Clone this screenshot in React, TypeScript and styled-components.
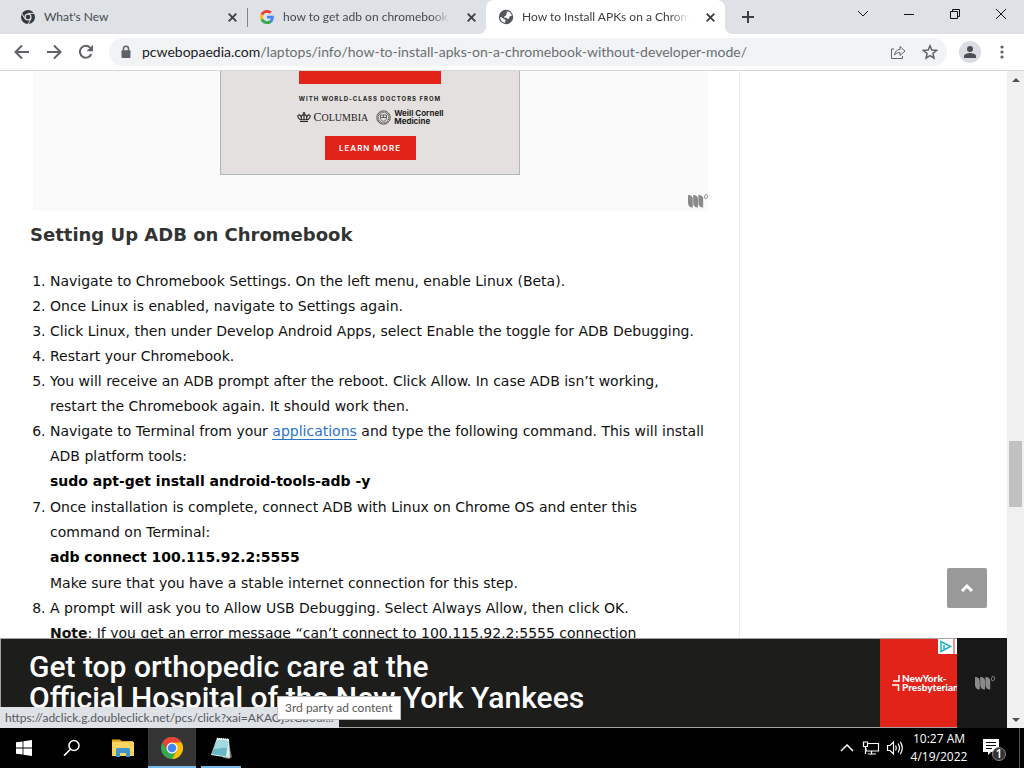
import React from "react";
import styled, { createGlobalStyle, css } from "styled-components";

const ui = `Lato, "Open Sans", sans-serif`;

const Global = createGlobalStyle`
  *, *::before, *::after { box-sizing: border-box; }
  body { margin: 0; background: #fff; font-family: ${ui}; }
  button { border: 0; padding: 0; margin: 0; background: none; font: inherit; color: inherit; }
  svg { display: block; flex: none; }
`;

const Screen = styled.div`
  height: 100vh;
  display: flex;
  flex-direction: column;
  overflow: hidden;
`;

/* ---------- tab strip ---------- */

const TabStrip = styled.header`
  display: flex;
  align-items: stretch;
  height: 34px;
  flex: none;
  padding-left: 8px;
  background: #dee1e6;
`;

const Tab = styled.div<{ $active?: boolean; $divider?: boolean }>`
  position: relative;
  flex: 0 1 239px;
  min-width: 0;
  display: flex;
  align-items: center;
  gap: 8px;
  padding: 0 7px 0 12px;
  color: ${(p) => (p.$active ? "#3c4043" : "#45494d")};
  ${(p) =>
    p.$divider &&
    css`
      &::after {
        content: "";
        position: absolute;
        right: -1px;
        top: 8px;
        width: 1px;
        height: 19px;
        background: #808488;
      }
    `}
  ${(p) =>
    p.$active &&
    css`
      background: #fff;
      border-radius: 8px 8px 0 0;
      &::before,
      &::after {
        content: "";
        position: absolute;
        bottom: 0;
        width: 8px;
        height: 8px;
      }
      &::before {
        left: -8px;
        background: radial-gradient(circle at 0 0, transparent 8px, #fff 8px);
      }
      &::after {
        right: -8px;
        background: radial-gradient(circle at 100% 0, transparent 8px, #fff 8px);
      }
    `}
`;

const TabTitle = styled.span<{ $fade?: boolean }>`
  flex: 1;
  min-width: 0;
  margin-right: 5px;
  overflow: hidden;
  white-space: nowrap;
  font-size: 12px;
  line-height: 18px;
  ${(p) => p.$fade && css`mask-image: linear-gradient(to right, #000 88%, transparent);`}
`;

const IconButton = styled.button<{ $w: number; $h?: number }>`
  width: ${(p) => p.$w}px;
  height: ${(p) => p.$h ?? p.$w}px;
  flex: none;
  display: flex;
  align-items: center;
  justify-content: center;
  color: #5f6368;
`;

const NewTab = styled(IconButton)`
  margin-left: 9px;
  align-self: center;
  color: #3c4043;
`;

const WindowControls = styled.div`
  margin-left: auto;
  display: flex;
  flex: none;
  button { color: #111; }
`;

/* ---------- toolbar ---------- */

const Toolbar = styled.nav`
  display: flex;
  align-items: center;
  height: 37px;
  flex: none;
  padding: 0 6px;
  background: #fff;
  border-bottom: 1px solid #d5d6d8;
`;

const AddressBar = styled.div`
  flex: 1;
  min-width: 0;
  height: 28px;
  margin: 0 7px;
  padding: 0 1px 0 11px;
  display: flex;
  align-items: center;
  gap: 10px;
  border-radius: 14px;
  background: #f1f3f4;
`;

const Url = styled.a`
  flex: 1;
  min-width: 0;
  overflow: hidden;
  white-space: nowrap;
  font-size: 14px;
  line-height: 20px;
  color: #6b6f73;
  text-decoration: none;
  b { font-weight: 400; color: #202124; }
`;

const BarActions = styled.div`
  display: flex;
`;

const Avatar = styled.span`
  width: 22px;
  height: 22px;
  border-radius: 50%;
  background: #d9dde3;
  display: flex;
  align-items: center;
  justify-content: center;
`;

/* ---------- page ---------- */

const Viewport = styled.div`
  position: relative;
  flex: 1;
  min-height: 0;
  display: flex;
`;

const Page = styled.main`
  position: relative;
  flex: 1;
  min-width: 0;
  display: flex;
  flex-direction: column;
`;

const Columns = styled.div`
  flex: 1;
  min-height: 0;
  overflow: hidden;
  display: grid;
  grid-template-columns: minmax(0, 740px) minmax(0, 1fr);
`;

const Article = styled.article`
  padding: 0 31px 0 30px;
  border-right: 1px solid #ededed;
  font-family: "DejaVu Sans", Verdana, sans-serif;
  color: #111;
`;

const AdSlot = styled.section`
  position: relative;
  margin-left: 3px;
  padding-right: 1px;
  height: 140px;
  background: #fafafa;
  display: flex;
  justify-content: center;
  align-items: flex-start;
`;

const AdCard = styled.div`
  width: 300px;
  height: 104px;
  border: 1px solid #b3b6b9;
  border-top: 0;
  background: #e4e0df;
  display: flex;
  flex-direction: column;
  align-items: center;
  font-family: Inter, sans-serif;
`;

const RedBar = styled.div`
  width: 142px;
  height: 13px;
  background: #e2231a;
`;

const AdCaption = styled.p`
  margin: 10px 0 0;
  font-size: 6px;
  line-height: 10px;
  font-weight: 700;
  letter-spacing: 1px;
  white-space: nowrap;
  color: #222;
`;

const Partners = styled.div`
  display: flex;
  align-items: center;
  gap: 3px;
  height: 18px;
  margin-top: 4px;
  color: #222;
`;

const Columbia = styled.span`
  display: inline-block;
  margin-right: 5px;
  font: 10px/14px "Liberation Serif", serif;
  &::first-letter { font-size: 12px; }
`;

const Cornell = styled.span`
  font-size: 8px;
  line-height: 8px;
  font-weight: 700;
`;

const LearnMore = styled.button`
  && {
    width: 91px;
    height: 24px;
    margin-top: 10px;
    background: #e2231a;
    color: #fff;
    font-size: 8px;
    font-weight: 600;
    letter-spacing: 1px;
  }
`;

const SlotMark = styled.span`
  position: absolute;
  right: -1px;
  bottom: 2px;
  color: #8a8a8a;
`;

const Heading = styled.h2`
  margin: 11px 0 21px;
  font-size: 18px;
  line-height: 26px;
  font-weight: 700;
  color: #333;
`;

const Steps = styled.ol`
  margin: 0;
  padding-left: 20px;
  font-size: 14px;
  line-height: 25px;
`;

const Command = styled.strong`
  display: block;
  color: #000;
  margin-bottom: 1px;
`;

const TextLink = styled.a`
  color: #2b74c9;
  text-decoration: none;
  border-bottom: 1px solid #2b74c9;
`;

const ToTop = styled.button`
  && {
    position: absolute;
    right: 20px;
    bottom: 120px;
    width: 40px;
    height: 40px;
    border-radius: 2px;
    background: #999;
    color: #fff;
    display: flex;
    align-items: center;
    justify-content: center;
  }
`;

/* ---------- sticky advert ---------- */

const StickyAd = styled.aside`
  flex: none;
  height: 90px;
  display: flex;
  background: #181818;
  font-family: Roboto, sans-serif;
`;

const Banner = styled.div`
  flex: 1;
  min-width: 0;
  display: flex;
  justify-content: space-between;
  border: 1px solid #a3a3a3;
  border-right: 0;
  background: #1d1d1b;
`;

const Slogan = styled.p`
  margin: 0;
  padding: 12px 0 0 28px;
  font-size: 30px;
  line-height: 31px;
  font-weight: 500;
  white-space: nowrap;
  color: #fff;
`;

const Hospital = styled.div`
  position: relative;
  width: 77px;
  flex: none;
  overflow: hidden;
  background: #e2231a;
  color: #fff;
  display: flex;
  align-items: center;
  gap: 2px;
  padding-left: 12px;
  font: 900 10px/9px Lato, sans-serif;
`;

const AdChoices = styled.a`
  position: absolute;
  top: 0;
  right: 0;
  width: 19px;
  height: 15px;
  background: #fff;
`;

const BannerMark = styled.div`
  width: 50px;
  display: flex;
  align-items: center;
  justify-content: center;
  padding-left: 6px;
  color: #8a8a8a;
`;

const StatusBubble = styled.div`
  position: absolute;
  left: 0;
  bottom: 0;
  width: 339px;
  height: 21px;
  padding: 0 5px;
  background: #dee1e6;
  color: #55595d;
  font-size: 12px;
  line-height: 21px;
  white-space: nowrap;
`;

const Tooltip = styled.div`
  position: absolute;
  left: 277px;
  bottom: 8px;
  padding: 0 7px;
  border: 1px solid #bdbdbd;
  background: #fff;
  color: #575757;
  font-size: 12px;
  line-height: 22px;
  white-space: nowrap;
`;

/* ---------- scrollbar ---------- */

const Scrollbar = styled.div`
  width: 17px;
  flex: none;
  display: flex;
  flex-direction: column;
  background: #f0f0f0;
`;

const ScrollTrack = styled.div`
  flex: 1;
  display: flex;
  flex-direction: column;
  padding: 0 2px;
`;

const Spacer = styled.div<{ $grow: number }>`
  flex: ${(p) => p.$grow} 0 0;
`;

const Thumb = styled.div`
  height: 66px;
  background: #c1c1c1;
`;

/* ---------- taskbar ---------- */

const Taskbar = styled.footer`
  height: 40px;
  flex: none;
  display: flex;
  align-items: stretch;
  background: #000;
  color: #fff;
`;

const PinnedApps = styled.div`
  display: flex;
  gap: 1px;
  margin-left: 3px;
`;

const TaskButton = styled.button<{ $running?: boolean; $focused?: boolean }>`
  && {
    width: 48px;
    display: flex;
    align-items: center;
    justify-content: center;
    position: relative;
    background: ${(p) => (p.$focused ? "#353535" : "none")};
    color: #fff;
  }
  &::after {
    content: "";
    display: ${(p) => (p.$running ? "block" : "none")};
    position: absolute;
    bottom: 0;
    left: ${(p) => (p.$focused ? 0 : 4)}px;
    right: ${(p) => (p.$focused ? 0 : 4)}px;
    height: 2px;
    background: #76b9ed;
  }
`;

const Tray = styled.div`
  margin-left: auto;
  display: flex;
  align-items: center;
  button { color: #fff; }
`;

const Clock = styled.time`
  width: 64px;
  text-align: center;
  font-family: "Open Sans", sans-serif;
  font-size: 12px;
  line-height: 18px;
  white-space: nowrap;
`;

const ShowDesktop = styled.button`
  && {
    width: 5px;
    align-self: stretch;
    border-left: 1px solid #555;
  }
`;

/* ---------- drawings ---------- */

const ChromeMono = () => (
  <svg width="16" height="16" viewBox="0 0 16 16">
    <circle cx="8" cy="8" r="7" fill="#34373b" />
    <circle cx="8" cy="8" r="3.6" fill="#dee1e6" />
    <circle cx="8" cy="8" r="2.3" fill="#34373b" />
    <path d="M8 4.4h6.4M4.9 9.8 1.8 4.4M11.1 9.8 8 15.2" stroke="#dee1e6" strokeWidth="1" fill="none" />
  </svg>
);

const GoogleG = () => (
  <svg width="16" height="16" viewBox="-3 -3 54 54">
    <path fill="#EA4335" d="M24 9.5c3.5 0 6.7 1.200 9.200 3.600l6.900-6.900C35.900 2.400 30.500 0 24 0 14.600 0 6.500 5.400 2.600 13.200l8 6.200C12.400 13.700 17.700 9.500 24 9.500z" />
    <path fill="#4285F4" d="M47 24.500c0-1.600-.2-3.100-.4-4.500H24v9h12.900c-.6 3-2.200 5.500-4.700 7.200l7.700 6C44.400 38 47 31.800 47 24.500z" />
    <path fill="#FBBC05" d="M10.500 28.600c-.5-1.500-.8-3-.8-4.600s.3-3.100.8-4.600l-8-6.200C.9 16.500 0 20.100 0 24s.9 7.500 2.600 10.800l7.900-6.200z" />
    <path fill="#34A853" d="M24 48c6.500 0 11.900-2.100 15.900-5.800l-7.700-6c-2.200 1.500-4.900 2.300-8.200 2.300-6.300 0-11.600-4.200-13.500-9.900l-8 6.200C6.500 42.600 14.600 48 24 48z" />
  </svg>
);

const Globe = () => (
  <svg width="16" height="16" viewBox="0 0 16 16">
    <circle cx="8" cy="8" r="7.200" fill="#53575c" />
    <path d="M8.600 2.200c2.600.2 4.700 1.900 5.300 4.300-.9.900-1.700.3-2.300 1-.7.800.2 1.600-.9 2.200-1 .5-1.600-.6-2.600-.8-.8-.2-1.500.1-1.900-.7-.3-.8.700-1.100 1.500-1.400.8-.4.200-1.300.7-2 .4-.6 1-.9.200-2.600zM2.100 8c1.300.2 2.700.6 3.300 1.600.5.900 1.700.5 2.100 1.500.3.800-.5 1.500-.5 2.700C4.300 13.400 2.200 11.200 2.100 8z" fill="#fff" />
  </svg>
);

const Cross = () => (
  <svg width="9" height="9" viewBox="0 0 9 9" stroke="#3c4043" strokeWidth="1.900">
    <path d="M.7.700l7.600 7.600M8.300.700L.7 8.300" />
  </svg>
);

const Line = ({ d, w = 16, h = 16, sw = 2 }: { d: string; w?: number; h?: number; sw?: number }) => (
  <svg width={w} height={h} viewBox={`0 0 ${w} ${h}`} fill="none" stroke="currentColor" strokeWidth={sw}>
    <path d={d} />
  </svg>
);

const Reload = () => (
  <svg width="16" height="16" viewBox="0 0 16 16">
    <path d="M13.300 10A5.900 5.900 0 1 1 12.300 3.900" fill="none" stroke="#5f6368" strokeWidth="2" />
    <path d="M15 .8v6.400H8.600z" fill="#5f6368" />
  </svg>
);

const Lock = () => (
  <svg width="12" height="14" viewBox="0 0 12 14">
    <path d="M3.500 6V3.800a2.500 2.500 0 0 1 5 0V6" fill="none" stroke="#5f6368" strokeWidth="1.500" />
    <rect x="1.500" y="5.200" width="9" height="7.800" rx="1" fill="#5f6368" />
  </svg>
);

const Mark = () => (
  <svg width="22" height="16" viewBox="0 0 22 16" fill="currentColor">
    <path d="M1 2c2.600 0 4.800 1 4.800 4v8.500C2.500 14.500 1 12.500 1 10zM6.200 2c2.600 0 4.800 1 4.800 4v8.500c-3.300 0-4.800-2-4.800-4.500zM11.400 2c2.600 0 4.800 1 4.800 4v8.500c-3.300 0-4.800-2-4.800-4.500z" />
    <ellipse cx="19" cy="3.600" rx="1.500" ry="2.300" transform="rotate(18 19 3.600)" fill="none" stroke="currentColor" strokeWidth=".9" />
  </svg>
);

const Crown = () => (
  <svg width="14" height="12" viewBox="0 0 14 12" fill="none" stroke="#222" strokeWidth="1.100">
    <path d="M3 10.500h8M3 8.800h8M3 8.500C.6 6.800.3 4.600 1.600 4c1.600-.6 2.800 1.200 2.800 4.300C4 5 5 3.600 7 3.600S10 5 9.600 8.300c0-3.100 1.200-4.900 2.800-4.300 1.300.6 1 2.800-1.400 4.500M7 1v7.500M5.800 2h2.400" />
  </svg>
);

const Seal = () => (
  <svg width="15" height="15" viewBox="0 0 15 15" fill="none" stroke="#555">
    <circle cx="7.500" cy="7.500" r="6.700" strokeWidth="1" />
    <circle cx="7.500" cy="7.500" r="5.300" strokeWidth="1.300" strokeDasharray="1 .6" />
    <path d="M4.500 5h6v3.500c0 1.500-2 2.300-3 2.800-1-.5-3-1.300-3-2.800zM4.500 7.500h6M7.500 5v2.500" strokeWidth=".9" />
  </svg>
);

const Windows = () => (
  <svg width="16" height="16" viewBox="0 0 16 16" fill="#fff">
    <path d="M0 2.300 6.600 1.400v6.200H0zM7.400 1.300 16 0v7.600H7.400zM0 8.400h6.600v6.200L0 13.700zM7.400 8.400H16V16l-8.600-1.300z" />
  </svg>
);

const Folder = () => (
  <svg width="22" height="20" viewBox="0 0 22 20">
    <path d="M0 1.500h8l1.500 1.500H21v4H0z" fill="#e8a820" />
    <path d="M0 4h22v14H0z" fill="#fcd462" />
    <path d="M4 19v-7.500a1.500 1.500 0 0 1 1.500-1.500h11a1.500 1.500 0 0 1 1.500 1.500V19h-4v-4H8v4z" fill="#3f93cf" />
  </svg>
);

const Chrome = () => (
  <svg width="24" height="24" viewBox="0 0 24 24">
    <circle cx="12" cy="12" r="11" fill="#34a853" />
    <path d="M12 12 2.470 6.500A11 11 0 0 1 21.530 6.500z" fill="#ea4335" />
    <path d="M12 6.500h9.530A11 11 0 0 1 12 23l4.760-8.250z" fill="#fbbc05" />
    <path d="M2.470 6.500 7.240 14.750 12 12V6.500z" fill="#ea4335" />
    <circle cx="12" cy="12" r="5.500" fill="#fff" />
    <circle cx="12" cy="12" r="4.300" fill="#4285f4" />
  </svg>
);

const Notepad = () => (
  <svg width="24" height="24" viewBox="0 0 24 24">
    <path d="M19 3l4 18-3 2-6-1z" fill="#7a6a58" />
    <path d="M8 2l12 1 1 19-19-3z" fill="#d5eef0" />
    <path d="M8.500 4l10.500 1-2 15.500L2.500 18z" fill="#69b7c4" />
    <path d="M8.500 4l10.500 1-1 7C13 11 9 13 5 13z" fill="#a4dbe2" />
    <path d="M8 2.500l12 1" stroke="#fff" strokeWidth="1.500" strokeDasharray="1 1" />
  </svg>
);

const Network = () => (
  <svg width="18" height="16" viewBox="0 0 18 16" fill="none" stroke="#fff" strokeWidth="1.200">
    <path d="M6 3.500h10.500v7.500H4V8M9.500 11v3M6 14h8M1.500 2h4v4.500h-4zM3.500 6.500V14" />
  </svg>
);

const Speaker = () => (
  <svg width="18" height="16" viewBox="0 0 18 16" fill="none" stroke="#fff" strokeWidth="1.200">
    <path d="M1.500 5.500H4L7.500 2v12L4 10.500H1.500zM9.500 5.500q1.500 2.500 0 5M12 3.500q3 4.500 0 9M14.300 1.800q4 6.200 0 12.400" />
  </svg>
);

const Notices = () => (
  <svg width="26" height="26" viewBox="0 0 26 26">
    <path d="M1 4h16v13H9l-3 3v-3H1z" fill="#fff" />
    <path d="M4 7.500h10M4 10.500h10M4 13.500h6" stroke="#000" />
    <circle cx="17" cy="19" r="6.500" fill="#333" stroke="#888" />
    <text x="17" y="23" fontSize="12" fill="#fff" textAnchor="middle" fontFamily="Open Sans, sans-serif" fontWeight="600">1</text>
  </svg>
);

export default function App() {
  return (
    <Screen>
      <Global />
      <TabStrip>
        <Tab $divider>
          <ChromeMono />
          <TabTitle>What's New</TabTitle>
          <IconButton $w={16} aria-label="Close tab"><Cross /></IconButton>
        </Tab>
        <Tab>
          <GoogleG />
          <TabTitle $fade>how to get adb on chromebook</TabTitle>
          <IconButton $w={16} aria-label="Close tab"><Cross /></IconButton>
        </Tab>
        <Tab $active>
          <Globe />
          <TabTitle $fade>How to Install APKs on a Chromebook</TabTitle>
          <IconButton $w={16} aria-label="Close tab"><Cross /></IconButton>
        </Tab>
        <NewTab $w={28} aria-label="New tab"><Line w={12} h={12} d="M6 0v12M0 6h12" /></NewTab>
        <WindowControls>
          <IconButton $w={46} $h={28} aria-label="Search tabs"><Line w={12} h={8} sw={1} d="M1 1l5 5 5-5" /></IconButton>
          <IconButton $w={46} $h={28} aria-label="Minimize"><Line w={10} h={10} sw={1} d="M0 5.500h10" /></IconButton>
          <IconButton $w={46} $h={28} aria-label="Restore"><Line w={10} h={10} sw={1} d="M.5 2.500h7v7h-7zM2.500 2.500v-2h7v7h-2" /></IconButton>
          <IconButton $w={46} $h={28} aria-label="Close"><Line w={12} h={12} sw={1} d="M1 1l10 10M11 1L1 11" /></IconButton>
        </WindowControls>
      </TabStrip>

      <Toolbar>
        <IconButton $w={32} aria-label="Back"><Line d="M15 8H2M8 1.500L1.500 8 8 14.500" /></IconButton>
        <IconButton $w={32} aria-label="Forward"><Line d="M1 8h13M8 1.500L14.500 8 8 14.500" /></IconButton>
        <IconButton $w={32} aria-label="Reload"><Reload /></IconButton>
        <AddressBar>
          <Lock />
          <Url href="#"><b>pcwebopaedia.com</b>/laptops/info/how-to-install-apks-on-a-chromebook-without-developer-mode/</Url>
          <BarActions>
            <IconButton $w={32} $h={28} aria-label="Share">
              <Line sw={1} d="M4 5H1.500v9.500h11V12M4.500 11C5 7.500 7 5.500 10 5.500V2.500L15 7l-5 4.500v-3c-2.500 0-4 .8-5.500 2.500z" />
            </IconButton>
            <IconButton $w={32} $h={28} aria-label="Bookmark">
              <Line sw={1.5} d="M8 1.800l1.800 4.300 4.700.4-3.600 3 1.100 4.600L8 11.600l-4 2.500 1.100-4.600-3.600-3 4.700-.4z" />
            </IconButton>
          </BarActions>
        </AddressBar>
        <IconButton $w={32} aria-label="Profile">
          <Avatar>
            <svg width="12" height="12" viewBox="0 0 12 12" fill="#4a4e53">
              <circle cx="6" cy="3" r="3" />
              <path d="M0 12v-2c0-2 4-3 6-3s6 1 6 3v2z" />
            </svg>
          </Avatar>
        </IconButton>
        <IconButton $w={32} aria-label="Menu">
          <svg width="4" height="14" viewBox="0 0 4 14" fill="#5f6368">
            <circle cx="2" cy="2" r="1.600" /><circle cx="2" cy="7" r="1.600" /><circle cx="2" cy="12" r="1.600" />
          </svg>
        </IconButton>
      </Toolbar>

      <Viewport>
        <Page>
          <Columns>
            <Article>
              <AdSlot>
                <AdCard>
                  <RedBar />
                  <AdCaption>WITH WORLD-CLASS DOCTORS FROM</AdCaption>
                  <Partners>
                    <Crown />
                    <Columbia>COLUMBIA</Columbia>
                    <Seal />
                    <Cornell>Weill Cornell<br />Medicine</Cornell>
                  </Partners>
                  <LearnMore>LEARN MORE</LearnMore>
                </AdCard>
                <SlotMark><Mark /></SlotMark>
              </AdSlot>
              <Heading>Setting Up ADB on Chromebook</Heading>
              <Steps>
                <li>Navigate to Chromebook Settings. On the left menu, enable Linux (Beta).</li>
                <li>Once Linux is enabled, navigate to Settings again.</li>
                <li>Click Linux, then under Develop Android Apps, select Enable the toggle for ADB Debugging.</li>
                <li>Restart your Chromebook.</li>
                <li>You will receive an ADB prompt after the reboot. Click Allow. In case ADB isn’t working, restart the Chromebook again. It should work then.</li>
                <li>
                  Navigate to Terminal from your <TextLink href="#">applications</TextLink> and type the following command. This will install ADB platform tools:
                  <Command>sudo apt-get install android-tools-adb -y</Command>
                </li>
                <li>
                  Once installation is complete, connect ADB with Linux on Chrome OS and enter this command on Terminal:
                  <Command>adb connect 100.115.92.2:5555</Command>
                  Make sure that you have a stable internet connection for this step.
                </li>
                <li>
                  A prompt will ask you to Allow USB Debugging. Select Always Allow, then click OK.
                  <br />
                  <b>Note</b>: If you get an error message “can’t connect to 100.115.92.2:5555 connection
                </li>
              </Steps>
            </Article>
          </Columns>
          <StickyAd>
            <Banner>
              <Slogan>Get top orthopedic care at the<br />Official Hospital of the New York Yankees</Slogan>
              <Hospital>
                <Line w={8} h={18} sw={1.5} d="M7 1v6H1M0 11h6.500v6" />
                <span>NewYork-<br />Presbyterian</span>
                <AdChoices href="#" aria-label="AdChoices">
                  <svg width="19" height="15" viewBox="0 0 19 15" fill="none" stroke="#1fb0c9" strokeWidth="1.500">
                    <path d="M3 2.500v10l9.500-5zM6 6v4" />
                    <path d="M16 0v15" stroke="#e2231a" strokeWidth="1" />
                  </svg>
                </AdChoices>
              </Hospital>
            </Banner>
            <BannerMark><Mark /></BannerMark>
          </StickyAd>
          <ToTop aria-label="Back to top"><Line w={14} h={10} sw={3} d="M2 8l5-5 5 5" /></ToTop>
          <StatusBubble>https://adclick.g.doubleclick.net/pcs/click?xai=AKAOjstGbodl...</StatusBubble>
          <Tooltip role="tooltip">3rd party ad content</Tooltip>
        </Page>
        <Scrollbar>
          <IconButton $w={17} aria-label="Scroll up"><svg width="8" height="4" viewBox="0 0 8 4" fill="#505050"><path d="M0 4l4-4 4 4z" /></svg></IconButton>
          <ScrollTrack><Spacer $grow={353} /><Thumb /><Spacer $grow={204} /></ScrollTrack>
          <IconButton $w={17} aria-label="Scroll down"><svg width="8" height="4" viewBox="0 0 8 4" fill="#505050"><path d="M0 0l4 4 4-4z" /></svg></IconButton>
        </Scrollbar>
      </Viewport>

      <Taskbar>
        <TaskButton aria-label="Start"><Windows /></TaskButton>
        <TaskButton aria-label="Search">
          <svg width="18" height="18" viewBox="0 0 18 18" fill="none" stroke="#fff" strokeWidth="1.500"><circle cx="11" cy="6.500" r="5" /><path d="M7.400 10.200L1 16.600" /></svg>
        </TaskButton>
        <PinnedApps>
          <TaskButton aria-label="File Explorer"><Folder /></TaskButton>
          <TaskButton $running $focused aria-label="Chrome"><Chrome /></TaskButton>
          <TaskButton $running aria-label="Notepad"><Notepad /></TaskButton>
        </PinnedApps>
        <Tray>
          <IconButton $w={24} aria-label="Hidden icons"><Line w={14} h={8} sw={1.5} d="M1 7l6-6 6 6" /></IconButton>
          <IconButton $w={24} aria-label="Network"><Network /></IconButton>
          <IconButton $w={24} aria-label="Volume"><Speaker /></IconButton>
          <Clock>10:27 AM<br />4/19/2022</Clock>
          <IconButton $w={48} $h={40} aria-label="Notifications"><Notices /></IconButton>
          <ShowDesktop aria-label="Show desktop" />
        </Tray>
      </Taskbar>
    </Screen>
  );
}
